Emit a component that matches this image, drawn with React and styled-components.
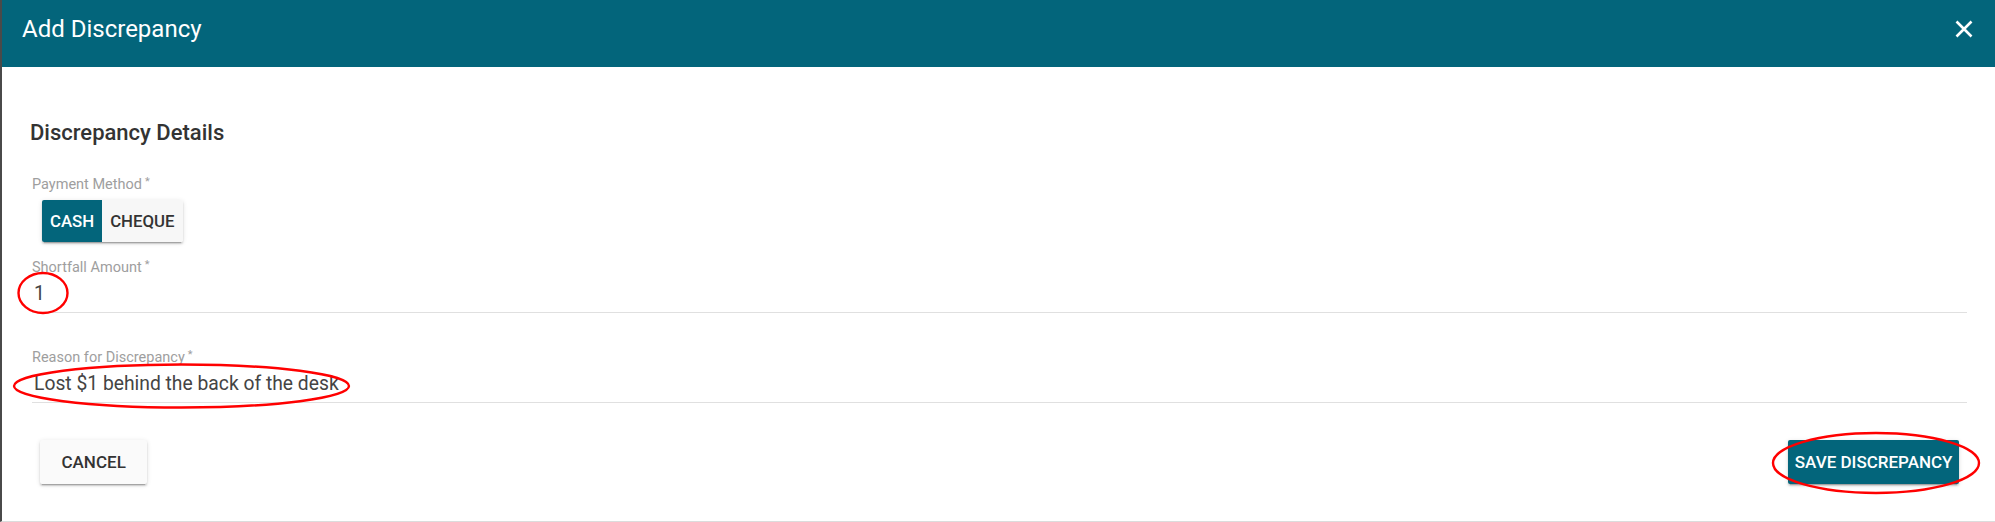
import styled, { createGlobalStyle } from "styled-components";

const teal = "#03657b";

const GlobalStyle = createGlobalStyle`
    html, body {
        margin: 0;
        padding: 0;
        background: #fff;
    }
    body {
        font-family: Roboto, "Liberation Sans", sans-serif;
    }
`

const Dialog = styled.div`
    position: relative;
    box-sizing: border-box;
    height: 522px;
    display: flex;
    flex-direction: column;
    border-left: 2px solid #4a4a4a;
    border-bottom: 1px solid #dcdcdc;
    background: #fff;
`

const Header = styled.header`
    box-sizing: border-box;
    height: 67px;
    flex-shrink: 0;
    display: flex;
    align-items: center;
    justify-content: space-between;
    padding: 0 22px 9px 20px;
    background-color: ${teal};
    color: #fff;
`

const Title = styled.h1`
    margin: 0;
    font-size: 24px;
    line-height: 28px;
    font-weight: 400;
`

const CloseButton = styled.button`
    display: flex;
    padding: 0;
    border: none;
    background: none;
    color: #fff;
    cursor: pointer;
`

const Body = styled.div`
    padding: 53px 28px 0 28px;
`

const SectionTitle = styled.h2`
    margin: 0;
    font-size: 22px;
    line-height: 26px;
    font-weight: 500;
    color: #333;
`

const Form = styled.form`
    display: flex;
    flex-direction: column;
    margin-top: 30px;
    padding-left: 2px;
`

const Field = styled.div`
    display: flex;
    flex-direction: column;
    margin-top: ${(p) => p.$gap || 0}px;
`

const Label = styled.label`
    font-size: 14.5px;
    line-height: 17px;
    color: #9e9e9e;
`

const Req = styled.sup`
    font-size: 11px;
    margin-left: 3px;
    vertical-align: top;
    line-height: 12px;
`

const Value = styled.div`
    font-size: 19.3px;
    line-height: 24px;
    padding: 6px 0 6px 2px;
    color: #444;
    border-bottom: 1px solid #e0e0e0;
`

const Toggle = styled.div`
    display: flex;
    align-self: flex-start;
    height: 42px;
    margin: 6.5px 0 0 10px;
    border-radius: 2px;
    overflow: hidden;
    box-shadow: 0 3px 1px -2px rgba(0, 0, 0, 0.2), 0 2px 2px 0 rgba(0, 0, 0, 0.14), 0 1px 5px 0 rgba(0, 0, 0, 0.12);
`

const ToggleOption = styled.button`
    border: none;
    padding: 0 8px;
    font-family: inherit;
    font-size: 16.8px;
    font-weight: 500;
    background: ${(p) => (p.$active ? teal : "#f7f7f7")};
    color: ${(p) => (p.$active ? "#fff" : "#333")};
    cursor: pointer;
`

const Actions = styled.div`
    display: flex;
    justify-content: space-between;
    margin-top: 29.5px;
    padding: 8px;
`

const Button = styled.button`
    height: 44px;
    padding: 0 ${(p) => (p.$primary ? 6.5 : 21.5)}px;
    border: none;
    border-radius: 2px;
    font-family: inherit;
    font-size: 17px;
    font-weight: 500;
    background: ${(p) => (p.$primary ? teal : "#fafafa")};
    color: ${(p) => (p.$primary ? "#fff" : "#333")};
    box-shadow: 0 3px 1px -2px rgba(0, 0, 0, 0.2), 0 2px 2px 0 rgba(0, 0, 0, 0.14), 0 1px 5px 0 rgba(0, 0, 0, 0.12);
    cursor: pointer;
`

const Markup = styled.svg`
    position: absolute;
    inset: 0;
    width: 100%;
    height: 100%;
    pointer-events: none;
`

const App = () => {
    return (
        <>
            <GlobalStyle />
            <Dialog>
                <Header>
                    <Title>Add Discrepancy</Title>
                    <CloseButton aria-label="close">
                        <svg width="18" height="18" viewBox="0 0 18 18">
                            <path d="M1.5 1.5 L16.5 16.5 M16.5 1.5 L1.5 16.5" stroke="currentColor" strokeWidth="2.6" />
                        </svg>
                    </CloseButton>
                </Header>
                <Body>
                    <SectionTitle>Discrepancy Details</SectionTitle>
                    <Form>
                        <Field>
                            <Label>Payment Method<Req>*</Req></Label>
                            <Toggle>
                                <ToggleOption type="button" $active>CASH</ToggleOption>
                                <ToggleOption type="button">CHEQUE</ToggleOption>
                            </Toggle>
                        </Field>
                        <Field $gap={17.6}>
                            <Label>Shortfall Amount<Req>*</Req></Label>
                            <Value>1</Value>
                        </Field>
                        <Field $gap={35.5}>
                            <Label>Reason for Discrepancy<Req>*</Req></Label>
                            <Value>Lost $1 behind the back of the desk</Value>
                        </Field>
                        <Actions>
                            <Button type="button">CANCEL</Button>
                            <Button type="button" $primary>SAVE DISCREPANCY</Button>
                        </Actions>
                    </Form>
                </Body>
                <Markup viewBox="0 0 1993 521" preserveAspectRatio="none">
                    <g fill="none" stroke="#f00" strokeWidth="2.4">
                        <ellipse cx="41" cy="293" rx="24.5" ry="20" />
                        <ellipse cx="179.5" cy="386" rx="167.5" ry="21.5" />
                        <ellipse cx="1874" cy="463" rx="103" ry="30" />
                    </g>
                </Markup>
            </Dialog>
        </>
    );
}

export default App
